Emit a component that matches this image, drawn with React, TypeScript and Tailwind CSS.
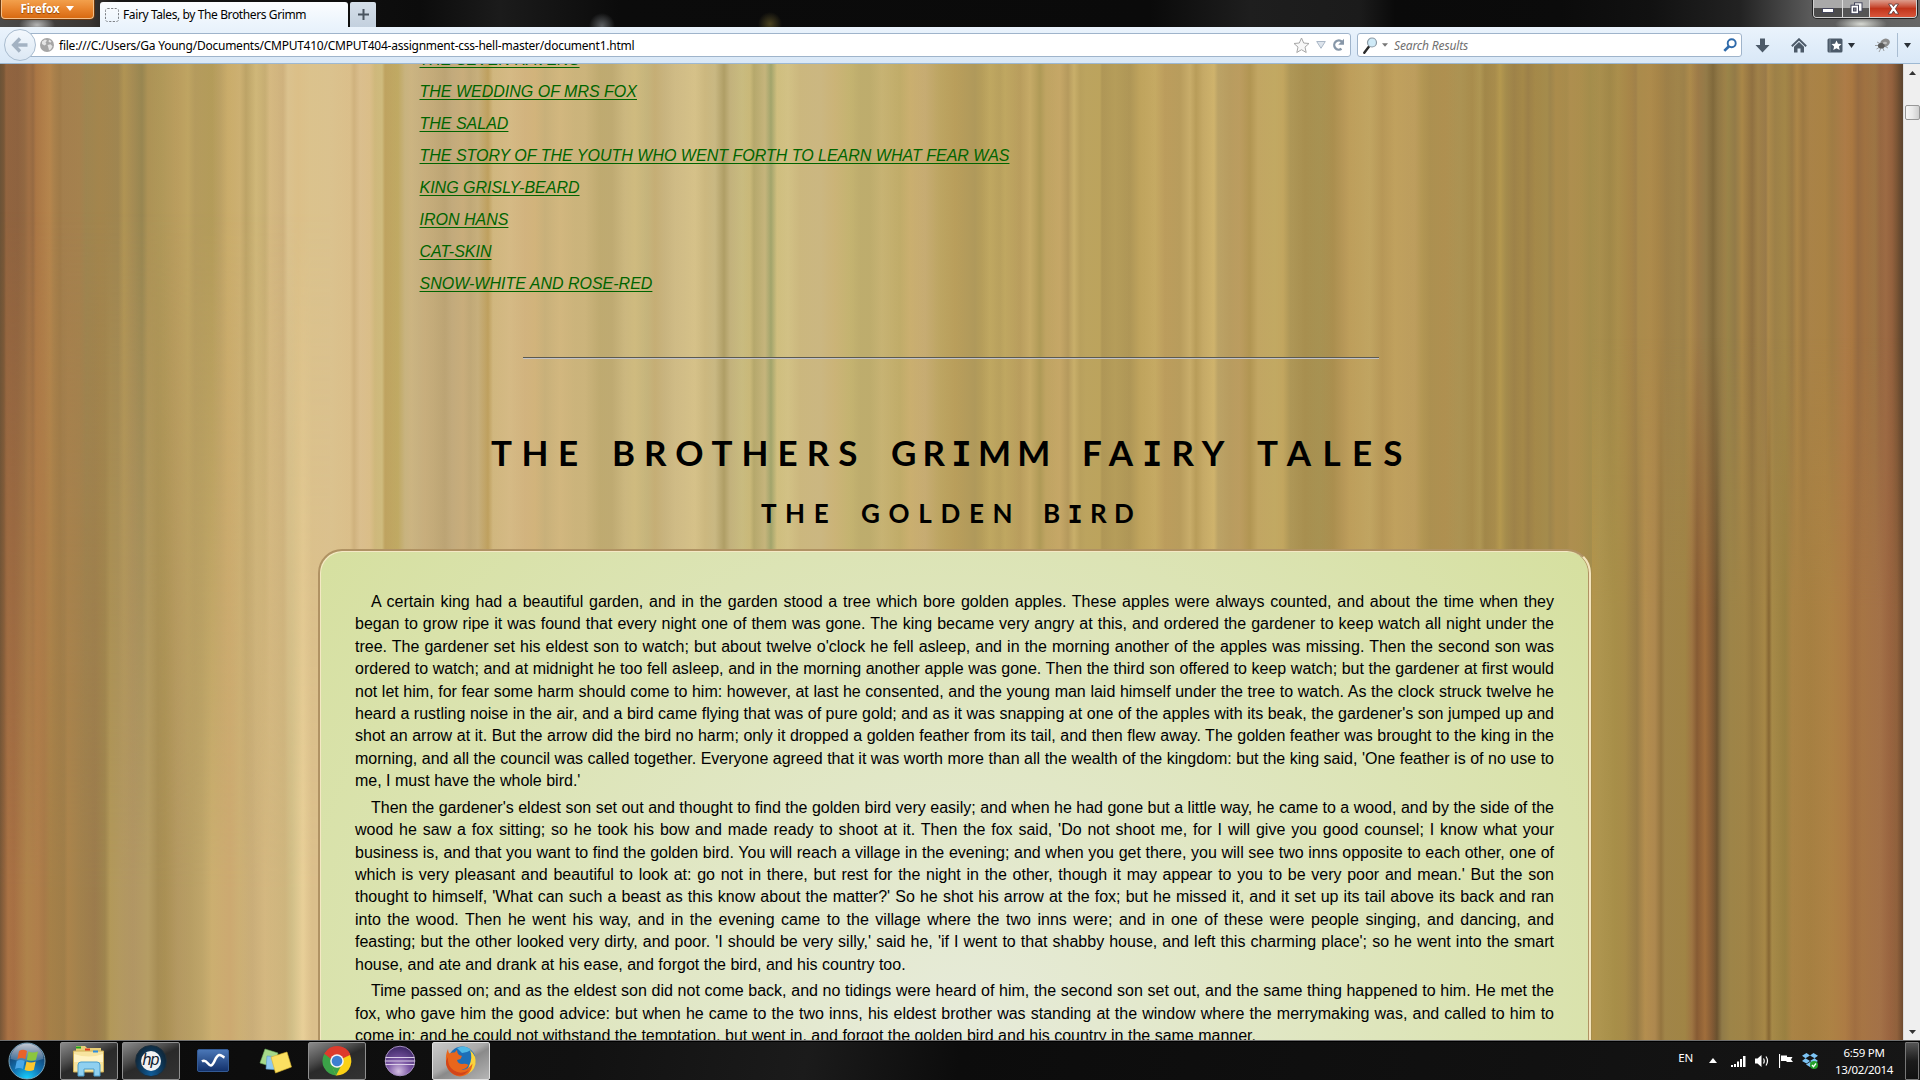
import React from "react";

type Stop = [number, string];

const parse = (s: string): Stop[] =>
  s.trim().split(/\s+/).map((p) => {
    const [x, c] = p.split(":");
    return [Number(x), "#" + c];
  });

const toGradient = (stops: Stop[]) =>
  `linear-gradient(90deg, ${stops.map(([x, c]) => `${c} ${x}px`).join(", ")})`;

// Colour of each wood grain along the top of the page
const GRAIN_TOP = parse(`
0:5a4530 4:6b4a30 6:8a5a3a 18:85583a 24:8a5e3c 29:9c6840 33:8f613d 36:a87040 50:b5824a 54:a67c48 60:9a7444 63:9f7a4a 80:a07c4a 86:98804c
100:9e8048 118:98804c 124:ad9250 132:a08850 142:8e804c 148:a88f52 160:ab9555 178:b89c5c 188:bda460 195:b0985a 212:ae9854 220:b89e60 228:c9ac68
240:ccb070 246:b8a062 256:cfb878 265:c4ac70 270:d6ba82 283:cdb07c 288:dcc490 298:dcc088 310:dcc48e 330:dcc490 350:dcc08c 354:ceb07c 360:dcc090
370:dcbf8a 375:ceb87a 382:cebc7c 385:ba9e58 398:bca65c 405:c6b27e 411:cbb482 418:c6b080 425:c6ac7c 434:c0a878 445:b8a072 452:c0a87c 463:c8ac7c
470:bea676 478:c6ae7c 488:bc9c58 493:d2b880 510:d8bc88 525:d4b480 535:d4b47c 545:c8b07a 560:d4b880 575:ccb47c 585:ccb47c 600:bca86e 612:bca870
625:ccb880 635:d0bc80 647:c4b47c 655:c4ac74 665:c8b480 675:d0bc88 695:d8c48c 705:ccb880 715:c8b884 724:a89860 730:c0b07c 742:c8bc80 750:c8b878
754:b0a468 765:c4b47c 771:98a068 777:d0c080 788:d4c488 800:ccb880 820:ccb884 835:ccb478 850:c4b470 860:bcac6c 870:bcac6c 882:c8b474 900:c0ac68
910:ccb070 925:c8ac74 940:bca460 955:b89c58 975:ac9658 982:b49c58 990:c0a860 1000:b8a05c 1005:c0a860 1020:b89c5c 1030:c8ac68 1036:b8a05c
1040:ac9854 1046:c0a462 1060:c8a868 1068:b4985c 1074:ccb26c 1080:b8a05c 1086:bca45e 1100:bca45c 1102:ac9454 1115:b49c58 1130:ac9454 1140:c0a45c
1155:c8ac64 1165:bc9c5c 1180:b89c5c 1190:ccb06c 1196:b89c58 1203:c8ac68 1214:d4b870 1218:bca468 1230:b89c60 1240:bc9c60 1250:b09450 1258:c4a864
1275:c4ac64 1283:c4a860 1290:ac9656 1305:a48c4c 1320:a49050 1333:a88c4c 1344:b89858 1350:c0a05c 1370:c4a864 1382:b89858 1395:c4a460 1415:c0a060
1422:b49854 1430:ac9050 1445:b09050 1460:ac9454 1472:a88c4c 1480:b09854 1485:a08648 1495:a88c4c 1500:b89c50 1506:a48c4c 1514:9c8048 1523:a48848
1528:9a7e48 1535:a48848 1547:a48c4c 1550:9c844c 1556:ac8c4c 1567:a88c4c 1570:b09050 1580:ae904e 1590:a48e4c 1600:aa904e 1610:a08848 1618:ac904c
1630:a88548 1636:a0804a 1638:ac8c4c 1650:b08c4c 1658:a88548 1667:9c7e48 1678:a0844a 1684:9c804a 1690:b08c4c 1698:9c7848 1706:907848 1713:786238
1718:8c7444 1725:9c8048 1728:988448 1735:907848 1742:ac8848 1752:8c6c40 1758:a08048 1766:98784a 1768:b08c4c 1775:9c8048 1785:a48848 1792:987844
1797:b08848 1803:9c7842 1810:ac8448 1825:ac8444 1832:a07c44 1845:b07c48 1852:ac7840 1858:946840 1865:a07040 1875:9c7444 1880:946440 1886:9c6844
1892:905c3c 1897:704c30 1902:4c3828`);

// Margins as they look towards the bottom of the page
const GRAIN_LEFT = parse(`
0:6a4a30 5:905c38 8:a86c40 14:a4683f 27:ae8048 38:ae7a48 44:a47444 50:a27c44 64:9a7844 68:a88048 80:9c7c48 95:947448 105:98804a 110:b09858
120:b09860 133:ae9464 148:b29c64 158:a08850 165:a48c50 178:b09660 190:b49c62 202:bca468 212:ccb070 230:cca870 240:ccb074 252:c8ac78 265:d4b880
285:ccb47c 292:d0c088 303:ecd49c 312:dcc08c 330:dcc090`);

const GRAIN_RIGHT = parse(`
0:b8984c 8:b09850 23:a89048 33:a88c48 45:947844 53:b89050 63:b08850 69:90703c 73:a08448 93:a08444 100:9c7040 105:80502e 113:a06838 120:7c5030
125:5c4428 130:8c7848 138:9c8448 153:a08446 160:947840 173:a88846 177:80602f 180:a88c48 193:98803f 200:ac8444 218:a88040 238:b08444 253:b07c44
263:a06c40 270:a87444 288:a47048 298:98603f 305:8c5c3a 311:603f28`);

const LINKS = [
  "THE SEVEN RAVENS",
  "THE WEDDING OF MRS FOX",
  "THE SALAD",
  "THE STORY OF THE YOUTH WHO WENT FORTH TO LEARN WHAT FEAR WAS",
  "KING GRISLY-BEARD",
  "IRON HANS",
  "CAT-SKIN",
  "SNOW-WHITE AND ROSE-RED",
];

const PARAGRAPHS = [
  "A certain king had a beautiful garden, and in the garden stood a tree which bore golden apples. These apples were always counted, and about the time when they began to grow ripe it was found that every night one of them was gone. The king became very angry at this, and ordered the gardener to keep watch all night under the tree. The gardener set his eldest son to watch; but about twelve o'clock he fell asleep, and in the morning another of the apples was missing. Then the second son was ordered to watch; and at midnight he too fell asleep, and in the morning another apple was gone. Then the third son offered to keep watch; but the gardener at first would not let him, for fear some harm should come to him: however, at last he consented, and the young man laid himself under the tree to watch. As the clock struck twelve he heard a rustling noise in the air, and a bird came flying that was of pure gold; and as it was snapping at one of the apples with its beak, the gardener's son jumped up and shot an arrow at it. But the arrow did the bird no harm; only it dropped a golden feather from its tail, and then flew away. The golden feather was brought to the king in the morning, and all the council was called together. Everyone agreed that it was worth more than all the wealth of the kingdom: but the king said, 'One feather is of no use to me, I must have the whole bird.'",
  "Then the gardener's eldest son set out and thought to find the golden bird very easily; and when he had gone but a little way, he came to a wood, and by the side of the wood he saw a fox sitting; so he took his bow and made ready to shoot at it. Then the fox said, 'Do not shoot me, for I will give you good counsel; I know what your business is, and that you want to find the golden bird. You will reach a village in the evening; and when you get there, you will see two inns opposite to each other, one of which is very pleasant and beautiful to look at: go not in there, but rest for the night in the other, though it may appear to you to be very poor and mean.' But the son thought to himself, 'What can such a beast as this know about the matter?' So he shot his arrow at the fox; but he missed it, and it set up its tail above its back and ran into the wood. Then he went his way, and in the evening came to the village where the two inns were; and in one of these were people singing, and dancing, and feasting; but the other looked very dirty, and poor. 'I should be very silly,' said he, 'if I went to that shabby house, and left this charming place'; so he went into the smart house, and ate and drank at his ease, and forgot the bird, and his country too.",
  "Time passed on; and as the eldest son did not come back, and no tidings were heard of him, the second son set out, and the same thing happened to him. He met the fox, who gave him the good advice: but when he came to the two inns, his eldest brother was standing at the window where the merrymaking was, and called to him to come in; and he could not withstand the temptation, but went in, and forgot the golden bird and his country in the same manner.",
];

const Caret = ({ className = "" }: { className?: string }) => (
  <svg className={className} width="8" height="5" viewBox="0 0 8 5">
    <path d="M0 0h8L4 5z" fill="currentColor" />
  </svg>
);

function TitleBar() {
  return (
    <div className="flex h-[27px] items-start bg-[#0c0c0c] bg-[radial-gradient(ellipse_26px_8px_at_1861px_24px,#d6d8d2,transparent),radial-gradient(ellipse_18px_10px_at_37px_25px,#b4b4b4,transparent),radial-gradient(circle_13px_at_602px_26px,#5c5f62,transparent),radial-gradient(circle_12px_at_770px_24px,#4a4220,transparent),linear-gradient(90deg,#4a4a4a_0px,#3a3532_90px,#161616_120px,#0c0c0c_420px,#1b1b1b_500px,#0b0b0b_620px,#0a0a0a_1150px,#1e1e1e_1250px,#1b1b1b_1360px,#0a0a0a_1395px,#0b0b0b_1560px,#111_1650px,#222_1740px,#5a5a5a_1810px,#666_1920px)]">
      <div className="ml-px flex h-[19px] w-[93px] items-center justify-center gap-[7px] rounded-b-[4px] border border-t-0 border-[#f3c08b] bg-linear-to-b from-[#f2a04c] via-[#e8842c] to-[#d86a10] pb-px shadow-[0_0_0_1px_#6b3a10]">
        <span className="text-[11.5px] font-bold tracking-[-0.1px] text-white [text-shadow:0_1px_1px_#8a4300]">Firefox</span>
        <Caret className="text-white" />
      </div>
      <div className="mt-0.5 ml-[6px] flex h-[25px] w-[248px] items-center rounded-t-[3px] bg-linear-to-b from-[#fbfdff] to-[#eaf3fc] pt-px pl-[5px]">
        <svg width="14" height="14" viewBox="0 0 14 14" fill="none" stroke="#7d8186" strokeDasharray="2.2 1.4">
          <rect x=".5" y=".5" width="13" height="13" rx="2" />
        </svg>
        <span className="ml-[4px] text-[12px] tracking-[-0.39px] whitespace-nowrap text-black">Fairy Tales, by The Brothers Grimm</span>
      </div>
      <div className="mt-0.5 ml-[2px] grid h-[25px] w-[26px] place-items-center rounded-t-[2px] bg-linear-to-b from-[#d5dfe9] to-[#c3d0de]">
        <svg width="11" height="11" viewBox="0 0 11 11" fill="#4a5560"><path d="M4.500 0h2v4.500h4.500v2H6.500V11h-2V6.500H0v-2h4.500z" /></svg>
      </div>
      <div className="mr-[3px] ml-auto flex h-[18px] w-[104px] overflow-hidden rounded-b-[4px] border border-t-0 border-[#d0d0d0] shadow-[0_0_0_1px_#222]">
        <div className="grid w-[29px] place-items-center border-r border-[#ddd] bg-linear-to-b from-[#a9a9a9] from-45% to-[#4c4c4c] to-50%">
          <svg width="12" height="6" viewBox="0 0 12 6" className="mt-1"><rect x=".5" y=".5" width="11" height="4" fill="#fff" stroke="#44465c" /></svg>
        </div>
        <div className="grid w-[27px] place-items-center border-r border-[#ddd] bg-linear-to-b from-[#aaa] from-45% to-[#555] to-50%">
          <svg width="13" height="13" viewBox="0 0 13 13" fill="none" stroke="#44465c">
            <rect x="4.500" y=".8" width="7.500" height="8.500" fill="#fff" />
            <rect x="1" y="3.200" width="7.500" height="8.500" fill="#fff" />
            <rect x="3.500" y="6" width="2.500" height="3" fill="#888" />
          </svg>
        </div>
        <div className="grid flex-1 place-items-center bg-linear-to-b from-[#dc9c8c] via-[#c1341a] via-50% to-[#d9553a]">
          <svg width="13" height="12" viewBox="0 0 13 12"><path d="M1.500 1h3.200l1.800 2.600L8.300 1h3.200L8.400 5.700l3.300 5.300H8.400L6.500 8l-1.900 3H1.300l3.300-5.300z" fill="#fff" stroke="#533" strokeWidth=".8" /></svg>
        </div>
      </div>
    </div>
  );
}

function NavBar() {
  return (
    <div className="flex h-[37px] items-center border-b border-[#9db8d2] bg-linear-to-b from-[#eaf3fc] to-[#d9e8f7]">
      <div className="relative z-10 ml-1 grid h-8 w-8 shrink-0 place-items-center rounded-full border border-[#a9bccf] bg-linear-to-b from-[#f3f8fd] to-[#dce8f4]">
        <svg width="18" height="16" viewBox="0 0 18 16" fill="none" stroke="#a3b2c2" strokeWidth="3.400"><path d="M9 1.500 2.700 8 9 14.500M3 8h13.500" /></svg>
      </div>
      <div className="-ml-2 flex h-6 w-[1323px] items-center rounded-r-[3px] border border-[#9fb4cb] bg-white pl-[11px]">
        <svg width="14" height="14" viewBox="0 0 14 14">
          <circle cx="7" cy="7" r="7" fill="#a5a5a5" />
          <path d="M2 3.500 5 1.500l2 1-1.500 2 1 1.500-2 1.500L2 6zM7.500 7l3-.8 2 2-1.500 3-2 1.300-.5-2.500zM9 1.500l2.500 1.700-1 1.500-2-1z" fill="#e4e4e4" />
        </svg>
        <span className="ml-[5px] pt-0.5 text-[12px] tracking-[-0.24px] whitespace-nowrap text-black">file:///C:/Users/Ga Young/Documents/CMPUT410/CMPUT404-assignment-css-hell-master/document1.html</span>
        <div className="mr-[5px] ml-auto flex items-center">
          <svg width="17" height="17" viewBox="0 0 17 17"><path d="m8.500 1 2.200 5 5.300.5-4 3.600 1.200 5.400-4.700-2.800-4.700 2.800L5 10.100 1 6.500 6.300 6z" fill="#f7f7f7" stroke="#a7a7a7" /></svg>
          <svg className="ml-[6px]" width="10" height="8" viewBox="0 0 10 8"><path d="M.7.500h8.600L5 7.300z" fill="#dde4ec" stroke="#aab7c6" /></svg>
          <svg className="ml-[6px]" width="13" height="14" viewBox="0 0 13 14"><path d="M9.500 10.800A4.600 4.600 0 1 1 10 3.700" fill="none" stroke="#8797a8" strokeWidth="2.300" /><path d="M12 .7v6H6.200z" fill="#8797a8" /></svg>
        </div>
      </div>
      <div className="ml-[6px] flex h-6 w-[385px] items-center rounded-[3px] border border-[#9fb4cb] bg-white pl-[5px]">
        <svg width="15" height="17" viewBox="0 0 15 17">
          <path d="M1.300 15.700 6 9.500" stroke="#2b2b2b" strokeWidth="2.400" strokeLinecap="round" />
          <circle cx="9" cy="5.500" r="4.500" fill="#cfeaf7" stroke="#8c9aa5" strokeWidth="1.200" />
        </svg>
        <svg className="ml-[4px]" width="6" height="4" viewBox="0 0 7 4"><path d="M0 0h7L3.500 4z" fill="#777" /></svg>
        <span className="ml-[6px] pt-0.5 text-[12px] tracking-[-0.15px] whitespace-nowrap text-[#707070] italic">Search Results</span>
        <svg className="mr-[4px] ml-auto" width="14" height="14" viewBox="0 0 14 14" fill="none" stroke="#2f6bab">
          <circle cx="8.700" cy="5.300" r="4" strokeWidth="1.900" />
          <path d="M6 8.300 1.300 12.900" strokeWidth="2.700" />
        </svg>
      </div>
      <div className="flex flex-1 items-center text-[#4c5a69]">
        <svg className="ml-[13px]" width="15" height="15" viewBox="0 0 15 15"><path d="M5 .5h5V7h4.500l-7 7.500L.5 7H5z" fill="currentColor" /></svg>
        <svg className="ml-[21px]" width="16" height="15" viewBox="0 0 16 15">
          <path d="M.8 8.200 8 1.200l7.200 7" fill="none" stroke="currentColor" strokeWidth="1.900" />
          <path d="M3 8.700 8 4l5 4.700V14.500H9.500v-4h-3v4H3z" fill="currentColor" />
        </svg>
        <svg className="ml-[20px]" width="16" height="15" viewBox="0 0 16 15">
          <rect x=".5" y=".5" width="15" height="14" rx="1.500" fill="currentColor" />
          <path d="M3 1v13" stroke="#7f8c99" />
          <path d="m9.500 2.500 1.500 3.300 3.500.3-2.600 2.400.8 3.500-3.200-1.800L6.300 12l.8-3.500-2.600-2.400 3.500-.3z" fill="#fff" />
        </svg>
        <svg className="ml-[5px] text-[#2a3138]" width="7" height="5" viewBox="0 0 7 5"><path d="M0 0h7L3.500 5z" fill="currentColor" /></svg>
        <svg className="ml-[19px]" width="17" height="15" viewBox="0 0 17 15">
          <path d="M3 4 7 6M1 7.500h5M2.500 11 7 8.500M5 14l2.500-5M10 13l-1.500-4M14 10l-4-2" stroke="#8a8a8a" strokeWidth=".8" />
          <ellipse cx="11" cy="4.800" rx="5" ry="4" transform="rotate(-25 11 4.800)" fill="#8b8b8b" />
          <ellipse cx="7.300" cy="7.800" rx="3.400" ry="2.800" fill="#5b5b5b" />
          <ellipse cx="11" cy="5" rx="2" ry="1.200" fill="#bdbdbd" />
        </svg>
        <div className="ml-[6px] h-6 w-px bg-[#a9bdd2]" />
        <svg className="ml-[6px] text-[#2a3138]" width="7" height="5" viewBox="0 0 7 5"><path d="M0 0h7L3.500 5z" fill="currentColor" /></svg>
      </div>
    </div>
  );
}

function ScrollBar() {
  return (
    <div className="flex w-[17px] flex-col items-center border-l border-[#dedede] bg-[#efefef]">
      <svg className="mt-[7px]" width="7" height="4" viewBox="0 0 7 4"><path d="M0 4h7L3.500 0z" fill="#333" /></svg>
      <div className="mt-[30px] h-[15px] w-[15px] rounded-[2px] border border-[#979797] bg-linear-to-r from-[#f7f7f7] via-[#e9e9e9] to-[#cfcfcf]" />
      <svg className="mt-auto mb-[6px]" width="7" height="4" viewBox="0 0 7 4"><path d="M0 0h7L3.500 4z" fill="#333" /></svg>
    </div>
  );
}

// A capital I with crossbars stands in for the plain stroke
const Word = ({ text, className }: { text: string; className: string }) => (
  <span className={className}>
    {text.split(/(I)/).map((t, i) =>
      t === "I" ? <span key={i} className="font-['DejaVu_Sans_Mono'] text-[0.97em] leading-none">I</span> : t
    )}
  </span>
);

function Page() {
  return (
    <div className="relative w-[1903px] overflow-hidden" style={{ backgroundImage: toGradient(GRAIN_TOP) }}>
      <div
        className="absolute inset-y-0 left-0 w-[330px] [mask-image:linear-gradient(to_bottom,transparent_15%,black_85%)]"
        style={{ backgroundImage: toGradient(GRAIN_LEFT) }}
      />
      <div
        className="absolute inset-y-0 right-0 w-[311px] [mask-image:linear-gradient(to_bottom,transparent_28%,black_56%)]"
        style={{ backgroundImage: toGradient(GRAIN_RIGHT) }}
      />
      <div className="absolute inset-0 bg-[linear-gradient(90deg,#b08c54_0px,#c4a468_180px,#d8bc88_300px,#c8b078_500px,#ccb87c_750px,#bca464_1000px,#b89c5c_1300px,#a88c4c_1500px,#a08448_1750px,#a07444_1902px)] opacity-20" />
      <div className="relative font-['Liberation_Sans',Arial,sans-serif]">
        <ul className="-mt-[20px] pl-[419.500px] text-[16px] leading-8 text-[#006400] italic">
          {LINKS.map((l) => (
            <li key={l}>
              <span className="whitespace-nowrap underline decoration-1 underline-offset-2">{l}</span>
            </li>
          ))}
        </ul>
        <div className="mt-[57px] ml-[523px] h-[2px] w-[856px] border-t border-b border-t-[#5c5a50] border-b-[#c2c2c8]" />
        <h1 className="mt-[69px] flex h-[48px] items-baseline pl-[491px] font-['Lato',sans-serif] text-[35px] leading-[48px] font-bold text-black">
          <Word text="THE" className="w-[121px] tracking-[9.500px]" />
          <Word text="BROTHERS" className="w-[279px] tracking-[9px]" />
          <Word text="GRIMM" className="w-[191px] tracking-[6.200px]" />
          <Word text="FAIRY" className="w-[175px] tracking-[9px]" />
          <Word text="TALES" className="w-[160px] tracking-[11.300px]" />
        </h1>
        <h2 className="mt-[21px] flex h-[32px] items-baseline pl-[761px] font-['Lato',sans-serif] text-[26px] leading-[32px] font-bold text-black">
          <Word text="THE" className="w-[100px] tracking-[8.500px]" />
          <Word text="GOLDEN" className="w-[182px] tracking-[8.700px]" />
          <Word text="BIRD" className="w-[120px] tracking-[7.300px]" />
        </h2>
        <article className="mt-[20px] ml-[318px] h-[700px] w-[1273px] rounded-t-[24px] border-t-2 border-r-2 border-l-2 border-t-[#b09263] border-r-[#f4e4bd] border-l-[#b09263] bg-[radial-gradient(circle_800px_at_50%_500px,#e7ebdb,#d6e0a0)] px-[35px] pt-[40px] text-justify indent-4 text-[16px] leading-[22.4px] text-black shadow-[inset_1px_1px_0_#f4e8c4,inset_-1px_0_0_#b09263]">
          {PARAGRAPHS.map((p, i) => (
            <p key={i} className="mb-[4.200px]">{p}</p>
          ))}
        </article>
      </div>
    </div>
  );
}

const TaskButton = ({ active, className = "", children }: { active?: boolean; className?: string; children: React.ReactNode }) => (
  <div
    className={
      (active
        ? "border-[#dedede] bg-[linear-gradient(150deg,#c9c9c9_0%,#a9a9a9_45%,#8a8a8a_55%,#b5b5b5_100%)] "
        : "border-[#8f8f8f] bg-[linear-gradient(155deg,#8a8a8a_0%,#4c4c4c_35%,#2a2a2a_50%,#333_100%)] ") +
      "grid h-[38px] w-[58px] place-items-center rounded-[2px] border " + className
    }
  >
    {children}
  </div>
);

function TaskBar() {
  return (
    <div className="flex h-10 items-center border-t border-[#6f6f6f] bg-[#101010] bg-[linear-gradient(100deg,#0a0a0a_0%,#111_30%,#1b1b1b_42%,#0c0c0c_50%,#111_80%,#161616_100%)] shadow-[inset_0_1px_0_#000]">
      <svg className="ml-[8px]" width="38" height="38" viewBox="0 0 38 38">
        <defs>
          <radialGradient id="orb" cx=".5" cy="1" r=".9"><stop offset="0" stopColor="#19d3ff" /><stop offset=".45" stopColor="#1275b5" /><stop offset="1" stopColor="#12305a" /></radialGradient>
          <linearGradient id="gloss" x2="0" y2="1"><stop offset="0" stopColor="#fff" stopOpacity=".75" /><stop offset="1" stopColor="#fff" stopOpacity=".15" /></linearGradient>
        </defs>
        <circle cx="19" cy="19" r="18" fill="url(#orb)" stroke="#7aa6bd" />
        <path d="M2.500 17a16.500 15.500 0 0 1 33 0q-16 5-33 0z" fill="url(#gloss)" />
        <path d="M11 9q4-2.500 8 0l-1.700 8.200q-4-2.200-8 0z" fill="#e8632a" />
        <path d="M20.500 9.500q4 2.200 9.500 0l-2 8.200q-4.500 2-9.200 0z" fill="#8cc63e" />
        <path d="M8.700 19q4-2.200 8 0l-1.700 8q-4-2.200-8 0z" fill="#4aa7e8" />
        <path d="M18.500 19.500q4.500 2.200 9.200 0l-1.900 8.500q-4.500 2-9.200 0z" fill="#fdc72e" />
      </svg>
      <TaskButton className="ml-[14px]">
        <svg width="34" height="32" viewBox="0 0 34 32">
          <path d="M4 1h9l2 2h14v20H4z" fill="#e9cf78" />
          <path d="M1.500 6h30v21h-30z" fill="#f7e4a0" stroke="#cfae52" />
          <path d="M2 9q15 5 29 0v8H2z" fill="#fff3c4" />
          <rect x="4" y="1.500" width="5" height="2" fill="#1da21d" /><rect x="13" y="3.500" width="5" height="2" fill="#e23a1c" /><rect x="21" y="5.500" width="5" height="2" fill="#2d8fe0" />
          <path d="M6 31V20q0-3 3-3h16q3 0 3 3v11h-6v-7H12v7z" fill="#8fd0f0" stroke="#4a9dcc" />
        </svg>
      </TaskButton>
      <TaskButton className="ml-[4px]">
        <div className="grid h-8 w-8 place-items-center rounded-full border border-[#1d2f3d] bg-radial-[at_50%_100%] from-[#0e5d9c] to-[#0f1a22]">
          <div className="grid h-5 w-5 place-items-center rounded-full bg-[#f2f2f2] pr-px pb-0.5 font-['Liberation_Sans'] text-[16px] leading-none tracking-[-1px] text-[#10222f] italic">hp</div>
        </div>
      </TaskButton>
      <svg className="ml-[17px]" width="32" height="23" viewBox="0 0 32 23">
        <defs><linearGradient id="wv" x2="0" y2="1"><stop offset="0" stopColor="#4b78b8" /><stop offset="1" stopColor="#12306a" /></linearGradient></defs>
        <rect x=".5" y=".5" width="31" height="22" rx="1.500" fill="url(#wv)" stroke="#335a94" />
        <path d="M5 12.500C9.500 9 11 17 14 16.500 17.500 16 18 7 22 6c2-.5 3 1.500 5.500 2.500" fill="none" stroke="#fff" strokeWidth="2.600" />
      </svg>
      <svg className="ml-[30px]" width="33" height="28" viewBox="0 0 33 28">
        <path d="M6 2 19 6l-5 14L1 16z" fill="#a6d98b" stroke="#6fae5c" strokeWidth=".6" />
        <path d="m8 9 13 1-1 13-13-1z" fill="#8cc8f0" stroke="#5598c6" strokeWidth=".6" />
        <path d="m12 10 16-5 4.500 15-16 6z" fill="#fbe061" stroke="#d6b22c" strokeWidth=".6" />
      </svg>
      <TaskButton className="ml-[16px]">
        <svg width="30" height="30" viewBox="0 0 30 30">
          <path d="M15 15 2.400 7.700A14.500 14.500 0 0 1 28.600 9.500z" fill="#dd3b2c" />
          <path d="M15 15 28 9A14.500 14.500 0 0 1 14 29.500z" fill="#fbd116" />
          <path d="m15 15-1 14.500A14.500 14.500 0 0 1 2.400 7.700z" fill="#3ba348" />
          <path d="M14 29.500 20.500 18 15 15 9.500 19z" fill="#fbd116" />
          <path d="m9 18.500 6 3 3.500-.5L14 29.500z" fill="#3ba348" />
          <path d="M2.400 7.700A14.500 14.500 0 0 1 28 8H15l-6 5z" fill="#dd3b2c" />
          <circle cx="15" cy="15" r="6.800" fill="#f4f4f4" /><circle cx="15" cy="15" r="5.300" fill="#3d7fd0" />
        </svg>
      </TaskButton>
      <svg className="ml-[18px]" width="32" height="32" viewBox="0 0 32 32">
        <defs><radialGradient id="ecl" cx=".45" cy=".85" r=".85"><stop offset="0" stopColor="#d3bfe2" /><stop offset=".45" stopColor="#7b57a4" /><stop offset="1" stopColor="#3b2663" /></radialGradient></defs>
        <circle cx="16" cy="16" r="14.800" fill="url(#ecl)" stroke="#a58fc0" />
        <path d="M1.500 12.500h29M1 16h30M1.500 19.500h29" stroke="#dccfe8" strokeWidth="1.200" />
      </svg>
      <TaskButton active className="ml-[16px]">
        <svg width="32" height="32" viewBox="0 0 32 32">
          <circle cx="17" cy="15" r="13.500" fill="#1d6fb8" />
          <path d="M12 3q8-4 14 2l-4 2-5 1z" fill="#4fb9e6" />
          <path d="M25 5q7 6 5.500 14A15 15 0 0 1 20 30l4-9q4-8 1-16z" fill="#fbd33c" />
          <path d="M3 4q0 3 1.500 4.500Q7 7 9.500 7.500L12 5q0 3 2 5l3 1-1.500 3-3.500 1q1 4 5 4 4-1 6.500 1-2 4-7 4.500 6 1 11-6-1 12-12.500 13A15 15 0 0 1 1 16Q.5 9 3 4z" fill="#e8661c" />
          <path d="M3 12q-1 9 6 13.500T24 25q-4 5.500-10 5.500A14 14 0 0 1 1 16z" fill="#d2451a" />
        </svg>
      </TaskButton>

      <div className="ml-auto flex h-full items-center text-white">
        <span className="-mt-[5px] text-[11.5px] tracking-[-0.2px]">EN</span>
        <svg className="ml-[16px]" width="8" height="5" viewBox="0 0 8 5"><path d="M0 5h8L4 0z" fill="#fff" /></svg>
        <svg className="ml-[14px]" width="15" height="12" viewBox="0 0 15 12" fill="#fff"><path d="M0 10h2v2H0zM3 9h2v3H3zM6 6.500h2V12H6zM9 4h2v8H9zM12 1h2.500v11H12z" /></svg>
        <svg className="ml-[9px]" width="14" height="14" viewBox="0 0 14 14"><path d="M0 4.500h2.500L6.500 1v12l-4-3.500H0z" fill="#fff" /><path d="M8.500 4.500q1.500 2.500 0 5M11 2.500q3 4.500 0 9" fill="none" stroke="#fff" strokeWidth="1.200" /></svg>
        <svg className="ml-[10px]" width="15" height="14" viewBox="0 0 15 14"><path d="M.5 0v14" stroke="#fff" strokeWidth="1.200" /><path d="M2 1.500h6V3h5.500l-1.500 2.500L14 8H7.500V7H2z" fill="#fff" /></svg>
        <svg className="ml-[8px]" width="16" height="16" viewBox="0 0 16 16">
          <path d="M4.500 0 8 2.500 3.500 5.200 0 2.800zM11.500 0 8 2.500l4.500 2.700L16 2.800zM3.500 5.200 0 8l4.500 2.500L8 8zM12.500 5.200 16 8l-4.500 2.500L8 8zM4 11.500 8 9l4 2.500L8 14z" fill="#7cc4f5" />
          <circle cx="12" cy="12" r="4" fill="#25a02c" /><path d="m10 12 1.500 1.700L14 10.500" fill="none" stroke="#fff" strokeWidth="1.300" />
        </svg>
        <div className="ml-[14px] flex w-[64px] flex-col items-center text-[11.5px] leading-[17px] tracking-[-0.3px]">
          <span className="whitespace-nowrap">6:59 PM</span>
          <span className="whitespace-nowrap">13/02/2014</span>
        </div>
        <div className="mr-px ml-[9px] h-[38px] w-[14px] rounded-[1px] border border-[#777] bg-linear-to-b from-[#555] via-[#1c1c1c] via-50% to-[#111]" />
      </div>
    </div>
  );
}

export default function App() {
  return (
    <div className="flex h-[1080px] w-[1920px] flex-col overflow-hidden bg-black font-['Noto_Sans','Open_Sans',sans-serif]">
      <TitleBar />
      <NavBar />
      <main className="flex h-[976px] overflow-hidden">
        <Page />
        <ScrollBar />
      </main>
      <TaskBar />
    </div>
  );
}
